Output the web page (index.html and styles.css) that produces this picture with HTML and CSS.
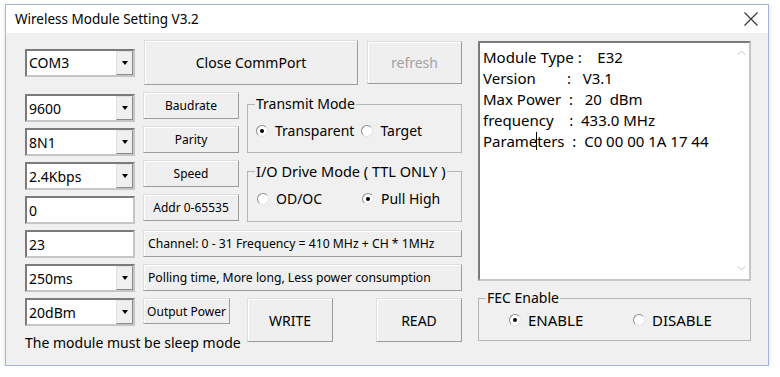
FILE: index.html
```html
<!DOCTYPE html>
<html lang="en">
<head>
    <meta charset="UTF-8">
    <title>Wireless Module Setting V3.2</title>
    <link rel="stylesheet" href="styles.css">
</head>
<body>
    <div class="window">
        <div class="titlebar">
            <span class="title">Wireless Module Setting V3.2</span>
            <svg class="close" width="14" height="14" viewBox="0 0 14 14">
                <path d="M0.5 0.5 L13.5 13.5 M13.5 0.5 L0.5 13.5" stroke="#333" stroke-width="1.1" fill="none"/>
            </svg>
        </div>

        <div class="content">
            <!-- Lado esquerdo -->
            <div class="left">
                <div class="toprow">
                    <div class="combo com"><span>COM3</span><i class="drop"></i></div>
                    <button class="btn big closeport">Close CommPort</button>
                    <button class="btn big refresh" disabled>refresh</button>
                </div>

                <div class="grid">
                    <div class="combo r1"><span>9600</span><i class="drop"></i></div>
                    <button class="btn small r1">Baudrate</button>
                    <fieldset class="group transmit">
                        <legend>Transmit Mode</legend>
                        <div class="opts">
                            <label class="radio on"><i></i>Transparent</label>
                            <label class="radio"><i></i>Target</label>
                        </div>
                    </fieldset>

                    <div class="combo r2"><span>8N1</span><i class="drop"></i></div>
                    <button class="btn small r2">Parity</button>

                    <div class="combo r3"><span>2.4Kbps</span><i class="drop"></i></div>
                    <button class="btn small r3">Speed</button>
                    <fieldset class="group iodrive">
                        <legend>I/O Drive Mode ( TTL ONLY )</legend>
                        <div class="opts">
                            <label class="radio first"><i></i>OD/OC</label>
                            <label class="radio on"><i></i>Pull High</label>
                        </div>
                    </fieldset>

                    <div class="field r4">0</div>
                    <button class="btn small r4">Addr 0-65535</button>

                    <div class="field r5">23</div>
                    <button class="btn wide r5">Channel: 0 - 31 Frequency = 410 MHz + CH * 1MHz</button>

                    <div class="combo r6"><span>250ms</span><i class="drop"></i></div>
                    <button class="btn wide r6">Polling time, More long, Less power consumption</button>

                    <div class="combo r7"><span>20dBm</span><i class="drop"></i></div>
                    <button class="btn small power r7">Output Power</button>
                    <div class="actions">
                        <button class="btn act">WRITE</button>
                        <button class="btn act">READ</button>
                    </div>

                    <p class="note">The module must be sleep mode</p>
                </div>
            </div>

            <!-- Lado direito -->
            <div class="right">
                <div class="info">
                    <div class="lines">Module Type :    E32
Version        :   V3.1
Max Power  :   20  dBm
frequency    :  433.0 MHz
Parameters  :  C0 00 00 1A 17 44</div>
                    <div class="scroll">
                        <svg width="9" height="6" viewBox="0 0 9 6"><path d="M0.5 5 L4.5 1 L8.5 5" stroke="#c4c4c4" fill="none"/></svg>
                        <svg width="9" height="6" viewBox="0 0 9 6"><path d="M0.5 1 L4.5 5 L8.5 1" stroke="#c4c4c4" fill="none"/></svg>
                    </div>
                </div>
                <fieldset class="group fec">
                    <legend>FEC Enable</legend>
                    <div class="opts">
                        <label class="radio big on first"><i></i>ENABLE</label>
                        <label class="radio big"><i></i>DISABLE</label>
                    </div>
                </fieldset>
            </div>
        </div>
    </div>
</body>
</html>
```

FILE: styles.css
```css
/* Janela */
body {
    margin: 0;
    background: #fff;
    font-family: "Noto Sans", sans-serif;
    color: #000;
}

.window {
    margin: 4px 0 0 5px;
    width: 764px;
    height: 362px;
    box-sizing: border-box;
    border: 1px solid #a3b6da;
    background: #f0f0f0;
    display: flex;
    flex-direction: column;
    box-shadow: 0 2px 5px rgba(0, 0, 0, 0.12);
}

.titlebar {
    height: 28px;
    flex: none;
    background: #fff;
    display: flex;
    align-items: center;
    justify-content: space-between;
    padding: 0 10px 0 9px;
    font-size: 13.5px;
}

.content {
    flex: 1;
    display: flex;
    gap: 16px;
    padding: 7px 16px 0 19px;
}

.left {
    width: 437px;
}

.right {
    width: 273px;
    padding-top: 1px;
}

/* Botões */
.btn {
    font-family: inherit;
    background: #efefef;
    border: 1px solid;
    border-color: #dedede #9c9c9c #9c9c9c #dedede;
    box-shadow: inset 1px 1px #fff;
    padding: 0;
    color: #000;
    font-size: 12px;
    box-sizing: border-box;
}

.btn.big {
    height: 45px;
    font-size: 14px;
}

.closeport {
    width: 214px;
    margin-right: 9px;
}

.refresh {
    width: 95px;
    color: #a3a3a3;
}

.btn.refresh.big {
    height: 43px;
}

.toprow {
    display: flex;
    align-items: center;
    height: 45px;
}

.toprow .combo {
    width: 110px;
    margin: 0 9px 0 0;
}

/* Grade de controles */
.grid {
    margin-top: 7px;
    display: grid;
    grid-template-columns: 110px 96px 215px;
    column-gap: 8px;
    grid-template-rows: repeat(7, 34px) auto;
}

.r1 { grid-row: 1; }
.r2 { grid-row: 2; }
.r3 { grid-row: 3; }
.r4 { grid-row: 4; }
.r5 { grid-row: 5; }
.r6 { grid-row: 6; }
.r7 { grid-row: 7; }

.combo, .field {
    grid-column: 1;
    height: 28px;
    margin-top: 2px;
    box-sizing: border-box;
    background: #fff;
    border: 2px solid;
    border-color: #7b7b7b #c6c6c6 #c6c6c6 #7b7b7b;
    display: flex;
    align-items: center;
    font-size: 14px;
    padding-left: 2px;
}

.drop {
    margin-left: auto;
    width: 17px;
    height: 100%;
    box-sizing: border-box;
    background: #f0f0f0;
    border: 1px solid;
    border-color: #e2e2e2 #8a8a8a #8a8a8a #e2e2e2;
    display: flex;
    align-items: center;
    justify-content: center;
}

.drop::after {
    content: "";
    border-top: 4px solid #000;
    border-left: 3.5px solid transparent;
    border-right: 3.5px solid transparent;
}

.btn.small {
    grid-column: 2;
    height: 27px;
}

.btn.power {
    width: 87px;
    height: 26px;
    margin-top: 2px;
    justify-self: start;
}

.btn.wide {
    grid-column: 2 / 4;
    height: 27px;
    margin-top: 2px;
    text-align: left;
    padding-left: 4px;
    font-size: 12.2px;
}

.actions {
    grid-column: 3;
    grid-row: 7 / 9;
    display: flex;
    justify-content: space-between;
    align-items: flex-start;
    margin-top: 2px;
}

.btn.act {
    width: 86px;
    height: 44px;
    font-size: 14px;
}

.note {
    grid-column: 1 / 4;
    grid-row: 8;
    margin: 4px 0 0;
    font-size: 14px;
    line-height: 18px;
    white-space: nowrap;
}

/* Grupos */
.group {
    margin: 0;
    padding: 0;
    border: 1px solid #b6b6b6;
    box-sizing: border-box;
    min-width: 0;
}

.group legend {
    font-size: 14px;
    line-height: 18px;
    padding: 0 1px;
    margin-left: 7px;
}

.opts {
    display: flex;
    align-items: center;
}

.transmit {
    grid-column: 3;
    grid-row: 1 / 3;
    align-self: start;
    margin-top: 3px;
    height: 58px;
}

.transmit .opts {
    padding: 9px 0 0 8px;
    gap: 7px;
}

.iodrive {
    grid-column: 3;
    grid-row: 3 / 5;
    align-self: start;
    margin-top: 2px;
    height: 60px;
}

.iodrive legend {
    font-size: 14.5px;
}

.iodrive .opts {
    padding: 10px 0 0 9px;
}

.iodrive .first {
    width: 105px;
}

.fec {
    margin-top: 8px;
    height: 52px;
}

.fec .opts {
    padding: 4px 0 0 30px;
}

.fec .first {
    width: 124px;
}

/* Radio */
.radio {
    display: inline-flex;
    align-items: center;
    gap: 7px;
    font-size: 14px;
    line-height: 18px;
}

.radio.big {
    font-size: 15px;
}

.radio i {
    width: 12px;
    height: 12px;
    box-sizing: border-box;
    border-radius: 50%;
    background: #fff;
    border: 1px solid;
    border-color: #8d8d8d #e4e4e4 #e4e4e4 #8d8d8d;
    display: flex;
    align-items: center;
    justify-content: center;
}

.radio.on i::after {
    content: "";
    width: 4px;
    height: 4px;
    border-radius: 50%;
    background: #000;
}

/* Caixa de informações */
.info {
    height: 240px;
    box-sizing: border-box;
    background: #fff;
    border: 2px solid;
    border-color: #7b7b7b #c6c6c6 #c6c6c6 #7b7b7b;
    display: flex;
}

.lines {
    position: relative;
    flex: 1;
    padding: 4px 0 0 3px;
    font-size: 15px;
    line-height: 21px;
    white-space: pre;
}

/* cursor de texto piscando */
.lines::after {
    content: "";
    position: absolute;
    left: 56px;
    top: 89px;
    width: 1px;
    height: 18px;
    background: #000;
}

.scroll {
    width: 16px;
    display: flex;
    flex-direction: column;
    justify-content: space-between;
    align-items: center;
    padding: 7px 0 8px;
}
```
